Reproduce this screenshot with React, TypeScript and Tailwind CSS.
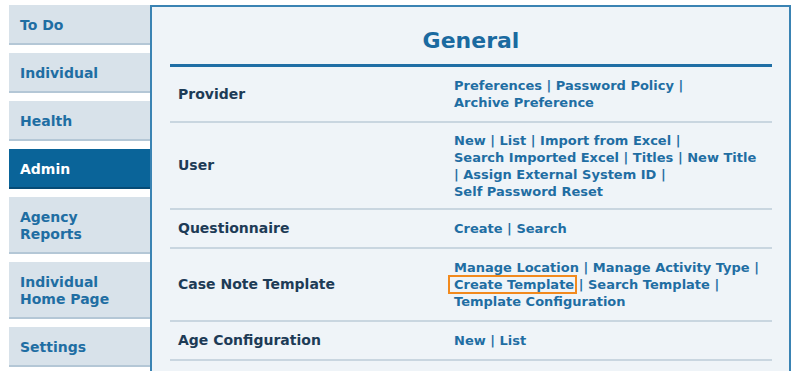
const tabs = [
  { label: ["To Do"] },
  { label: ["Individual"] },
  { label: ["Health"] },
  { label: ["Admin"], active: true },
  { label: ["Agency", "Reports"] },
  { label: ["Individual", "Home Page"] },
  { label: ["Settings"] },
];

type Row = { name: string; lines: string[][]; pad?: string };

const rows: Row[] = [
  {
    name: "Provider",
    lines: [["Preferences", "Password Policy", ""], ["Archive Preference"]],
  },
  {
    name: "User",
    pad: "pt-[9px] pb-[8px]",
    lines: [
      ["New", "List", "Import from Excel", ""],
      ["Search Imported Excel", "Titles", "New Title"],
      ["", "Assign External System ID", ""],
      ["Self Password Reset"],
    ],
  },
  { name: "Questionnaire", lines: [["Create", "Search"]] },
  {
    name: "Case Note Template",
    lines: [
      ["Manage Location", "Manage Activity Type", ""],
      ["Create Template", "Search Template", ""],
      ["Template Configuration"],
    ],
  },
  { name: "Age Configuration", lines: [["New", "List"]] },
];

function LinkLine({ items }: { items: string[] }) {
  return (
    <div className="whitespace-nowrap">
      {items.map((item, i) => (
        <span key={i}>
          {i > 0 && (i === 1 && items[0] === "" ? "| " : " | ")}
          {item === "Create Template" ? (
            <span className="-ml-[4px] -mr-px pl-[4px] pr-px outline-2 outline-offset-0 outline-[#f28a1e]">
              {item}
            </span>
          ) : (
            item
          )}
        </span>
      ))}
    </div>
  );
}

export default function App() {
  return (
    <div className="flex h-[371px] overflow-hidden bg-white pl-[9px] pt-[5px] font-['DejaVu_Sans',sans-serif] font-bold">
      {/* Side tabs */}
      <nav className="flex w-[142px] shrink-0 flex-col gap-2">
        {tabs.map((t) => (
          <div
            key={t.label.join(" ")}
            className={`border-b-2 pb-[9px] pl-[11px] pt-[12px] text-[14px] leading-[17px] ${
              t.active
                ? "border-[#064b76] bg-[#0a6499] text-white"
                : "border-[#b4c7d6] bg-[#d8e2ea] text-[#1f6ea3]"
            }`}
          >
            {t.label.map((l) => (
              <div key={l}>{l}</div>
            ))}
          </div>
        ))}
      </nav>

      {/* Main panel */}
      <main className="-ml-px w-[641px] shrink-0 border-2 border-b-0 border-[#3a83b3] bg-[#eff4f8] pl-[18px] pr-[17px] pt-[19px]">
        <h1 className="border-b-[3px] border-[#1f6ea5] pb-[8px] text-center text-[22px] leading-[30px] text-[#1a6aa0]">
          General
        </h1>
        {rows.map((r) => (
          <div
            key={r.name}
            className="grid grid-cols-[276px_1fr] border-b-2 border-[#c9d6e0]"
          >
            <div className="flex items-center pl-2 text-[14px] text-[#1d3b56]">
              {r.name}
            </div>
            <div
              className={`pl-2 text-[13px] leading-[17px] text-[#1f6ea3] ${r.pad ?? "py-[10px]"}`}
            >
              {r.lines.map((l, i) => (
                <LinkLine key={i} items={l} />
              ))}
            </div>
          </div>
        ))}
      </main>
    </div>
  );
}
